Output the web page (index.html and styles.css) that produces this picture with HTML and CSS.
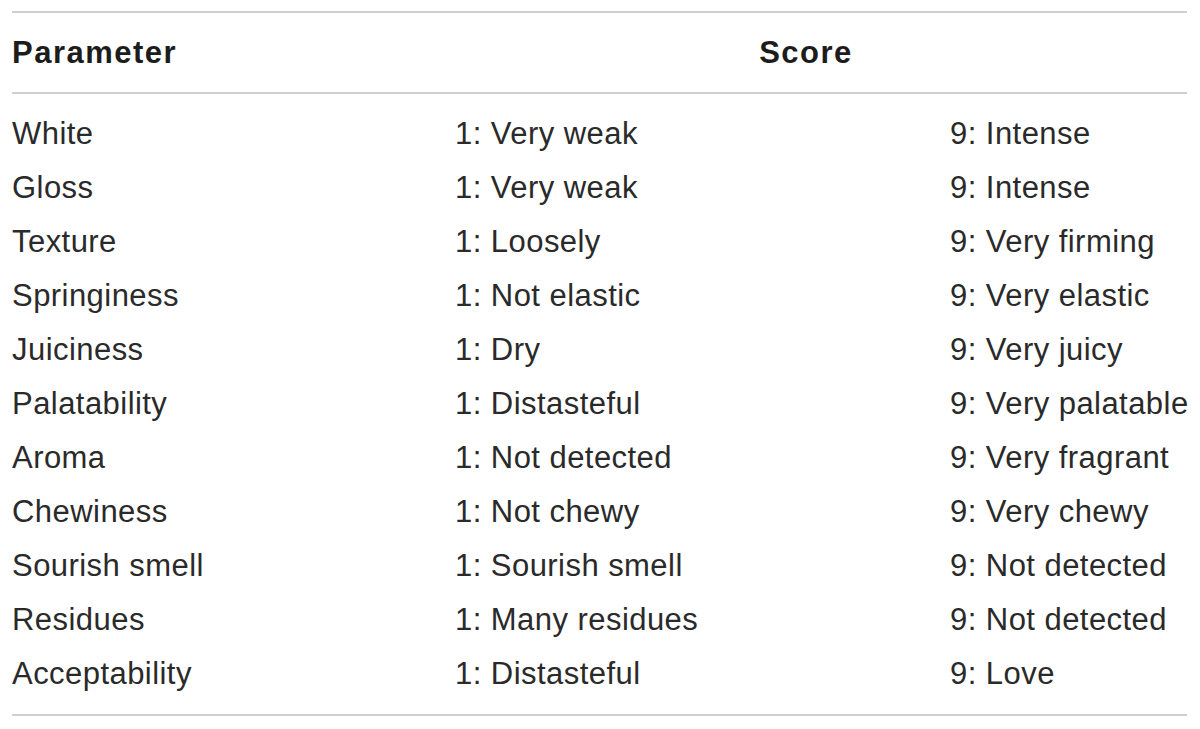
FILE: index.html
```html
<!DOCTYPE html>
<html>
<head>
<meta charset="utf-8">
<link rel="stylesheet" href="styles.css">
</head>
<body>
<div class="table">
  <div class="head">
    <div class="th">Parameter</div>
    <div class="th score">Score</div>
  </div>
  <div class="body">
    <div class="td">White</div><div class="td">1: Very weak</div><div class="td">9: Intense</div>
    <div class="td">Gloss</div><div class="td">1: Very weak</div><div class="td">9: Intense</div>
    <div class="td">Texture</div><div class="td">1: Loosely</div><div class="td">9: Very firming</div>
    <div class="td">Springiness</div><div class="td">1: Not elastic</div><div class="td">9: Very elastic</div>
    <div class="td">Juiciness</div><div class="td">1: Dry</div><div class="td">9: Very juicy</div>
    <div class="td">Palatability</div><div class="td">1: Distasteful</div><div class="td">9: Very palatable</div>
    <div class="td">Aroma</div><div class="td">1: Not detected</div><div class="td">9: Very fragrant</div>
    <div class="td">Chewiness</div><div class="td">1: Not chewy</div><div class="td">9: Very chewy</div>
    <div class="td">Sourish smell</div><div class="td">1: Sourish smell</div><div class="td">9: Not detected</div>
    <div class="td">Residues</div><div class="td">1: Many residues</div><div class="td">9: Not detected</div>
    <div class="td">Acceptability</div><div class="td">1: Distasteful</div><div class="td">9: Love</div>
  </div>
</div>
</body>
</html>
```
FILE: styles.css
```css
html, body {
  margin: 0;
  padding: 0;
  background: #ffffff;
}

body {
  padding: 11px 13px 0 12px;
  font-family: "Liberation Sans", Arial, sans-serif;
  color: #2a2a2a;
}

.table {
  width: 1175px;
  border-top: 2px solid #cfcfcf;
  border-bottom: 2px solid #cfcfcf;
}

.head {
  display: grid;
  grid-template-columns: 443px 1fr;
  height: 79px;
  align-items: center;
  border-bottom: 2px solid #cfcfcf;
}

.th {
  font-weight: bold;
  font-size: 31px;
  letter-spacing: 1.5px;
  color: #1c1c1c;
  line-height: 79px;
}

.score {
  text-align: center;
  padding-right: 30px;
}

.body {
  display: grid;
  grid-template-columns: 443px 495px 1fr;
  grid-auto-rows: 54px;
  padding: 13px 0 13px;
}

.td {
  font-size: 31px;
  letter-spacing: 0.45px;
  line-height: 54px;
  white-space: nowrap;
}
```
